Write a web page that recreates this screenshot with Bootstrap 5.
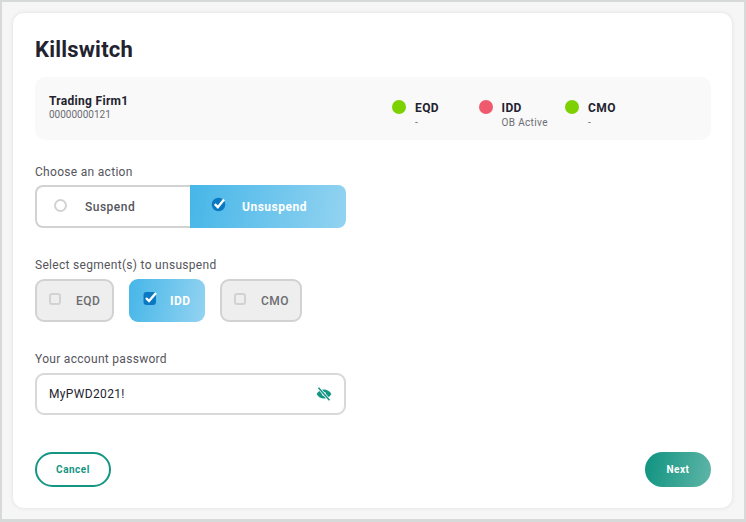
<!doctype html>
<html lang="en">
<head>
<meta charset="utf-8">
<title>Killswitch</title>
<link href="https://cdn.jsdelivr.net/npm/bootstrap@5.3.0/dist/css/bootstrap.min.css" rel="stylesheet">
<style>
html,body{height:100%;margin:0;overflow:hidden}
body{font-family:Roboto,"Liberation Sans",sans-serif;background:#fff;color:#23232f}
.ks-frame{width:746px;height:522px;border:2px solid #d6dad8;border-bottom-width:3px;background:#f6f6f6;padding:10px 11px 10px 10px}
.ks-card{height:100%;background:#fff;border:1px solid #ececec;border-radius:12px;box-shadow:0 0 4px rgba(0,0,0,.06);padding:23px 21px 0 22px}
.ks-title{font-size:22px;line-height:28px;font-weight:700;margin:0 0 13px;letter-spacing:.2px;color:#23232f}
.ks-panel{height:63px;background:#f9f9f9;border-radius:10px;padding:17px 14px 0 14px}
.ks-info{width:343px;flex:none}
.ks-firm{font-size:12px;line-height:14px;font-weight:700;letter-spacing:.3px;white-space:nowrap;margin-bottom:1px}
.ks-sub{font-size:10px;line-height:12px;color:#6c6c74;letter-spacing:.35px}
.ks-id{letter-spacing:0}
.ks-state{width:86.5px}
.ks-dot{width:14px;height:14px;border-radius:50%;flex:none;margin-right:9px;margin-top:6px}
.ks-green{background:#7ed100}
.ks-red{background:#ef5a6f}
.ks-code{font-size:12px;line-height:14px;font-weight:700;margin-top:7px;margin-bottom:2px;letter-spacing:.4px}
.ks-label{font-size:12px;line-height:16px;color:#55555c;margin:0 0 5px;letter-spacing:.3px;display:block}
.ks-label-gap{margin-bottom:6px}
.ks-toggle{width:311px;height:43px;margin-bottom:29px}
.ks-opt{font-size:12px;font-weight:500;letter-spacing:.5px;display:flex;align-items:center;height:100%}
.ks-off{width:155px;border:2px solid #d2d2d2;border-right:0;border-radius:8px 0 0 8px;background:#fff;color:#55555c;padding-left:17px}
.ks-on{color:#fff;background:linear-gradient(100deg,#46b6e8,#93d3f1)}
.ks-toggle .ks-on{width:156px;border-radius:0 8px 8px 0;padding-left:21px;font-weight:700}
.ks-radio{width:13px;height:13px;border:2px solid #d2d2d2;border-radius:50%;flex:none;margin-right:18px;margin-top:-3px}
.ks-tick{flex:none;margin-top:-5px}
.ks-toggle .ks-tick{margin-right:15px}
.ks-segs{height:43px;gap:15px;margin-bottom:29px}
.ks-seg{border-radius:9px;font-size:12px;font-weight:500;letter-spacing:.5px;display:flex;align-items:center;height:100%}
.ks-dis{border:2px solid #d2d2d2;background:#eee;color:#6c6c70;padding-left:12px}
.ks-box{width:12px;height:12px;border:2px solid #d2d2d2;border-radius:3px;flex:none;margin-right:15px;margin-top:-3px}
.ks-w1{width:79px}.ks-w2{width:76px}.ks-w3{width:82px}
.ks-segs .ks-on{padding-left:14px;font-weight:700}
.ks-segs .ks-tick{margin-right:12px}
.ks-pass{width:311px;height:42px;margin-bottom:37px}
.ks-input{height:100%;border:2px solid #d8d8d8;border-radius:9px;font-size:12px;line-height:16px;padding:0 40px 0 12px;color:#23232f;letter-spacing:.35px;font-family:inherit}
.ks-eye{position:absolute;right:14px;top:14px}
.ks-btn{height:35px;border-radius:18px;font-size:10px;font-weight:700;letter-spacing:.5px;padding:0;line-height:1}
.ks-cancel{width:76px;border:2px solid #159683;color:#159683;background:#fff}
.ks-next{width:66px;border:0;color:#fff;background:linear-gradient(100deg,#0f9380,#5fb5a8)}
</style>
</head>
<body>
<div class="ks-frame">
  <div class="ks-card">
    <h1 class="ks-title">Killswitch</h1>
    <div class="ks-panel d-flex">
      <div class="ks-info">
        <div class="ks-firm">Trading Firm1</div>
        <div class="ks-sub ks-id">00000000121</div>
      </div>
      <div class="d-flex">
        <div class="ks-state d-flex"><span class="ks-dot ks-green"></span><div><div class="ks-code">EQD</div><div class="ks-sub">-</div></div></div>
        <div class="ks-state d-flex"><span class="ks-dot ks-red"></span><div><div class="ks-code">IDD</div><div class="ks-sub">OB Active</div></div></div>
        <div class="ks-state d-flex"><span class="ks-dot ks-green"></span><div><div class="ks-code">CMO</div><div class="ks-sub">-</div></div></div>
      </div>
    </div>

    <div class="mt-3 pt-2">
      <span class="ks-label">Choose an action</span>
      <div class="ks-toggle d-flex">
        <div class="ks-opt ks-off"><span class="ks-radio"></span>Suspend</div>
        <div class="ks-opt ks-on">
          <svg class="ks-tick" width="16" height="16" viewBox="0 0 16 16"><circle cx="7.5" cy="8.5" r="6.8" fill="#0b78c2"/><path d="M3.8 8.2l3 3L13 3.6" fill="none" stroke="#fff" stroke-width="2.4"/></svg>
          Unsuspend
        </div>
      </div>
      <span class="ks-label ks-label-gap">Select segment(s) to unsuspend</span>
      <div class="ks-segs d-flex">
        <div class="ks-seg ks-dis ks-w1"><span class="ks-box"></span>EQD</div>
        <div class="ks-seg ks-on ks-w2">
          <svg class="ks-tick" width="15" height="16" viewBox="0 0 15 16"><rect x="0.5" y="2" width="12.5" height="13" rx="3" fill="#0b78c2"/><path d="M3 8l3 3 7-8" fill="none" stroke="#fff" stroke-width="2.4"/></svg>
          IDD
        </div>
        <div class="ks-seg ks-dis ks-w3"><span class="ks-box"></span>CMO</div>
      </div>
      <label class="ks-label ks-label-gap" for="ks-pw">Your account password</label>
      <div class="ks-pass position-relative">
        <input id="ks-pw" class="form-control ks-input" type="text" value="MyPWD2021!">
        <svg class="ks-eye" width="16" height="14" viewBox="0 0 16 14"><path d="M.6 7C2.3 4 5 2.4 8 2.4S13.7 4 15.4 7C13.7 10 11 11.6 8 11.6S2.3 10 .6 7z" fill="#159683"/><circle cx="8" cy="7" r="2" fill="#fff"/><path d="M2.5.8l11 12.4" stroke="#fff" stroke-width="3"/><path d="M2.5.8l11 12.4" stroke="#159683" stroke-width="1.6"/></svg>
      </div>
      <div class="d-flex justify-content-between">
        <button type="button" class="btn ks-btn ks-cancel">Cancel</button>
        <button type="button" class="btn ks-btn ks-next">Next</button>
      </div>
    </div>
  </div>
</div>
<script src="https://cdn.jsdelivr.net/npm/bootstrap@5.3.0/dist/js/bootstrap.bundle.min.js"></script>
</body>
</html>
